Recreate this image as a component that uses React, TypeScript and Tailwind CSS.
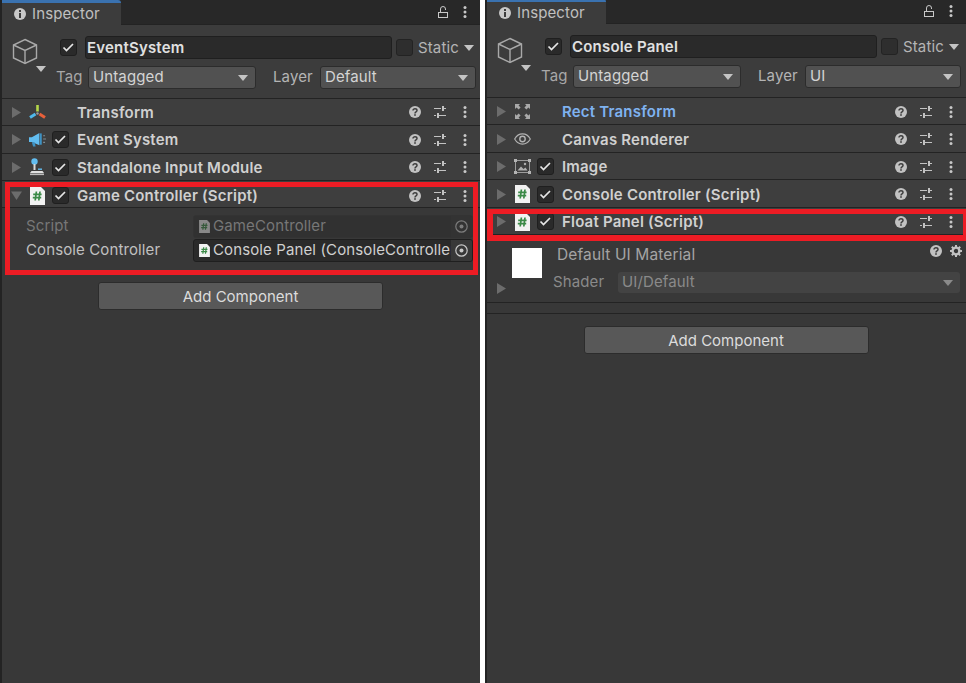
import React from 'react'

const Caret = ({ open = false }: { open?: boolean }) => (
  <svg width="11" height="11" viewBox="0 0 11 11" className="shrink-0">
    {open ? <path d="M0 1.5h11L5.5 10z" fill="#6c6c6c" /> : <path d="M1 0v11l9-5.5z" fill="#6c6c6c" />}
  </svg>
)

const SmallDown = ({ color = '#c4c4c4' }: { color?: string }) => (
  <svg width="10" height="6" viewBox="0 0 10 6" className="shrink-0">
    <path d="M0 0h10L5 6z" fill={color} />
  </svg>
)

const Check = () => (
  <div className="h-[17px] w-[17px] shrink-0 rounded-[3px] border border-[#1f1f1f] bg-[#2a2a2a]">
    <svg width="15" height="15" viewBox="0 0 15 15">
      <path d="M2.5 7.5l3 3 6.5-6.5" fill="none" stroke="#e6e6e6" strokeWidth="1.7" />
    </svg>
  </div>
)

const Help = () => (
  <svg width="12" height="12" viewBox="0 0 12 12">
    <circle cx="6" cy="6" r="6" fill="#c2c2c2" />
    <path d="M4 4.6C4 3.4 4.9 2.8 6 2.8s2 .6 2 1.7c0 1.5-2 1.4-2 2.9" fill="none" stroke="#3e3e3e" strokeWidth="1.5" />
    <rect x="5.2" y="8.2" width="1.6" height="1.6" fill="#3e3e3e" />
  </svg>
)

const Sliders = () => (
  <svg width="12" height="12" viewBox="0 0 12 12" fill="#c2c2c2">
    <rect x="0" y="2" width="7" height="1" />
    <rect x="8" y="0" width="2" height="5" />
    <rect x="10" y="2" width="2" height="1" />
    <rect x="0" y="9" width="2" height="1" />
    <rect x="3" y="7" width="2" height="5" />
    <rect x="5" y="9" width="7" height="1" />
  </svg>
)

const Dots = () => (
  <svg width="4" height="12" viewBox="0 0 4 12" fill="#c8c8c8">
    <circle cx="2" cy="1.5" r="1.5" />
    <circle cx="2" cy="6" r="1.5" />
    <circle cx="2" cy="10.5" r="1.5" />
  </svg>
)

const Target = ({ dim = false }: { dim?: boolean }) => (
  <svg width="13" height="13" viewBox="0 0 13 13">
    <circle cx="6.5" cy="6.5" r="5.7" fill="none" stroke={dim ? '#7c7c7c' : '#c8c8c8'} strokeWidth="1.2" />
    <circle cx="6.5" cy="6.5" r="2" fill={dim ? '#7c7c7c' : '#c8c8c8'} />
  </svg>
)

const Cube = () => (
  <svg width="26" height="27" viewBox="0 0 26 27" fill="none" stroke="#a9a9a9" strokeWidth="1.4">
    <path d="M13 1.5L24.5 7v13L13 25.5 1.5 20V7z" />
    <path d="M1.5 7L13 12.5 24.5 7M13 12.5v13" />
  </svg>
)

const ScriptIcon = ({ w = 15, h = 18, dim = false }: { w?: number; h?: number; dim?: boolean }) => (
  <svg width={w} height={h} viewBox="0 0 15 18" className="shrink-0" opacity={dim ? 0.45 : 1}>
    <path d="M0 0h11l4 4v14H0z" fill="#f2f2f2" />
    <path d="M6.4 4.5L5.2 13.5M10 4.5L8.8 13.5M3.2 7.4h8.4M2.8 10.6h8.4" stroke="#3b8a47" strokeWidth="1.7" fill="none" />
  </svg>
)

const TransformIcon = () => (
  <svg width="17" height="15" viewBox="0 0 17 15">
    <path d="M8.5 0v6.5" stroke="#b5d84a" strokeWidth="2.6" />
    <path d="M6.5 9L1 12.5" stroke="#4fb8ea" strokeWidth="3" />
    <path d="M10.5 9l5.5 3.5" stroke="#e8603a" strokeWidth="3" />
    <circle cx="8.5" cy="8.5" r="1.2" fill="#9a9a9a" />
  </svg>
)

const EventIcon = () => (
  <svg width="18" height="16" viewBox="0 0 18 16">
    <path d="M0 5h3l8-4.5v13L3 10H0z" fill="#62bdf0" />
    <path d="M3 10.5h3l1 4.5H4.3z" fill="#3f93c4" />
    <rect x="11.5" y="1" width="2" height="12" fill="#3f93c4" />
    <path d="M15 3.5h2M15 7h3M15 10.5h2" stroke="#7d8c96" strokeWidth="1.2" />
  </svg>
)

const InputIcon = () => (
  <svg width="15" height="18" viewBox="0 0 15 18">
    <circle cx="4.5" cy="3.5" r="3.2" fill="#62bdf0" />
    <rect x="3.5" y="6" width="2" height="6" fill="#d8d8d8" />
    <rect x="8" y="10.5" width="4" height="1.4" fill="#62bdf0" />
    <path d="M1.5 13h11l1.5 2H0z" fill="#e2e2e2" />
    <rect x="0" y="15.5" width="14" height="1.6" fill="#bdbdbd" />
  </svg>
)

const RectIcon = () => (
  <svg width="15" height="15" viewBox="0 0 15 15" fill="#a8a8a8">
    <path d="M0 0h5L3.6 1.6l2 2-2 2-2-2L0 5z" />
    <path d="M15 0v5l-1.6-1.4-2 2-2-2 2-2L10 0z" />
    <path d="M0 15v-5l1.6 1.4 2-2 2 2-2 2L5 15z" />
    <path d="M15 15h-5l1.4-1.6-2-2 2-2 2 2L15 10z" />
  </svg>
)

const EyeIcon = () => (
  <svg width="20" height="14" viewBox="0 0 20 14" fill="none" stroke="#b4b4b4">
    <path d="M.8 7C3 3 6 1 10 1s7 2 9.2 6C17 11 14 13 10 13S3 11 .8 7z" strokeWidth="1.3" />
    <circle cx="10" cy="7" r="3.2" strokeWidth="1.6" />
  </svg>
)

const ImageIcon = () => (
  <svg width="17" height="15" viewBox="0 0 17 15">
    <rect x="1.5" y="1.5" width="14" height="12" fill="none" stroke="#9c9c9c" />
    <path d="M3.5 11.5l3.5-4 2.5 2.5 2-1.5 2 3z" fill="#b0b0b0" />
    <circle cx="11" cy="5" r="1.2" fill="#b0b0b0" />
    <g fill="#b4b4b4">
      <rect x="0" y="0" width="3" height="3" />
      <rect x="14" y="0" width="3" height="3" />
      <rect x="0" y="12" width="3" height="3" />
      <rect x="14" y="12" width="3" height="3" />
    </g>
  </svg>
)

interface RowProps {
  name: string
  icon: React.ReactNode
  check?: boolean
  open?: boolean
  blue?: boolean
  className: string
}

const Row = ({ name, icon, check = true, open = false, blue = false, className }: RowProps) => (
  <div className={`flex items-center border-b border-[#232323] bg-[#3e3e3e] pl-[9px] ${className}`}>
    <Caret open={open} />
    <div className="ml-[7px] flex w-[17px] justify-center">{icon}</div>
    <div className="ml-[6px] w-[17px]">{check && <Check />}</div>
    <span className={`ml-[8px] flex-1 pt-[2px] text-[15px] font-semibold tracking-[0.2px] ${blue ? 'text-[#7fb2f0]' : 'text-[#d0d0d0]'}`}>{name}</span>
    <Help />
    <div className="ml-[13px]"><Sliders /></div>
    <div className="ml-[17px] mr-[13px]"><Dots /></div>
  </div>
)

const Select = ({ value, className }: { value: string; className: string }) => (
  <div className={`flex h-[23px] items-center justify-between rounded-[3px] border border-[#2c2c2c] bg-[#515151] pl-[4px] pr-[7px] text-[15px] text-[#d4d4d4] ${className}`}>
    <span>{value}</span>
    <SmallDown />
  </div>
)

const Header = ({ name, layer }: { name: string; layer: string }) => (
  <div className="flex h-[74px] border-b border-[#232323] bg-[#3c3c3c]">
    <div className="relative ml-[10px] mt-[13px] w-[26px]">
      <Cube />
      <div className="absolute left-[24px] top-[28px]"><SmallDown /></div>
    </div>
    <div className="ml-[8px] flex-1">
      <div className="mt-[11px] flex h-[23px] items-center pl-[14px]">
        <Check />
        <div className="ml-[8px] flex h-[23px] w-[307px] items-center rounded-[3px] border border-[#1f1f1f] bg-[#2a2a2a] pl-[1px] pt-[2px] text-[15px] font-semibold tracking-[0.2px] text-[#e0e0e0]">{name}</div>
        <div className="ml-[4px] h-[17px] w-[17px] rounded-[3px] border border-[#232323] bg-[#2e2e2e]" />
        <span className="ml-[5px] pt-[2px] text-[15px] text-[#b4b4b4]">Static</span>
        <div className="ml-[5px]"><SmallDown /></div>
      </div>
      <div className="mt-[7px] flex h-[23px] items-center">
        <span className="ml-[10px] w-[32px] text-[15px] text-[#a8a8a8]">Tag</span>
        <Select value="Untagged" className="w-[168px]" />
        <span className="ml-[17px] w-[47px] text-[15px] text-[#b4b4b4]">Layer</span>
        <Select value={layer} className="w-[156px]" />
      </div>
    </div>
  </div>
)

const TabBar = () => (
  <div className="flex h-[25px] border-b border-[#232323] bg-[#282828]">
    <div className="flex h-[25px] w-[119px] items-center gap-[6px] rounded-tr-[3px] border-t-[3px] border-[#3a72b0] bg-[#3c3c3c] pl-[12px] text-[15px] text-[#c0c0c0]">
      <svg width="12" height="12" viewBox="0 0 12 12">
        <circle cx="6" cy="6" r="6" fill="#c8c8c8" />
        <rect x="5" y="5" width="2" height="5" fill="#3c3c3c" />
        <rect x="5" y="2" width="2" height="2" fill="#3c3c3c" />
      </svg>
      Inspector
    </div>
    <div className="ml-auto mr-[13px] flex items-center gap-[15px]">
      <svg width="10" height="12" viewBox="0 0 10 12" fill="none" stroke="#c8c8c8" strokeWidth="1">
        <rect x=".5" y="6.5" width="9" height="5" />
        <path d="M2.5 6V3a2.5 2.5 0 0 1 5 0v1" />
      </svg>
      <Dots />
    </div>
  </div>
)

const AddComponent = () => (
  <div className="flex justify-center pr-[1px]">
    <div className="flex h-[28px] w-[285px] items-center justify-center rounded-[3px] border border-[#2c2c2c] bg-[#585858] pt-[2px] text-[15px] tracking-normal text-[#dcdcdc]">Add Component</div>
  </div>
)

const FieldRow = ({ label, value, dim = false }: { label: string; value: string; dim?: boolean }) => (
  <div className="flex h-[24px] items-center">
    <span className={`ml-[24px] w-[167px] text-[15px] ${dim ? 'text-[#777777]' : 'text-[#c0c0c0]'}`}>{label}</span>
    <div className={`flex h-[23px] w-[280px] items-center overflow-hidden rounded-[3px] border pl-[5px] text-[15px] ${dim ? 'border-[#333333] bg-[#313131] text-[#777777]' : 'border-[#1f1f1f] bg-[#2a2a2a] text-[#d0d0d0]'}`}>
      <ScriptIcon w={11} h={13} dim={dim} />
      <span className="ml-[3px] flex-1 overflow-hidden whitespace-nowrap">{value}</span>
      <div className={`flex h-full w-[21px] shrink-0 items-center justify-center ${dim ? 'bg-[#333333]' : 'bg-[#383838]'}`}>
        <Target dim={dim} />
      </div>
    </div>
  </div>
)

const RedBox = ({ className }: { className: string }) => (
  <div className={`pointer-events-none absolute border-[#ed1c24] ${className}`} />
)

const LeftPanel = () => (
  <div className="relative h-[683px] w-[480px] shrink-0 border-l-2 border-[#232323] bg-[#383838]">
    <TabBar />
    <Header name="EventSystem" layer="Default" />
    <Row name="Transform" icon={<TransformIcon />} check={false} className="h-[27px]" />
    <Row name="Event System" icon={<EventIcon />} className="h-[28px]" />
    <Row name="Standalone Input Module" icon={<InputIcon />} className="h-[27px]" />
    <Row name="Game Controller (Script)" icon={<ScriptIcon />} open className="h-[27px] pt-[3px]" />
    <div className="pt-[6px]">
      <FieldRow label="Script" value="GameController" dim />
      <FieldRow label="Console Controller" value="Console Panel (ConsoleController)" />
    </div>
    <div className="mt-[20px]"><AddComponent /></div>
    <RedBox className="left-[3px] top-[182px] h-[93px] w-[473px] border-[5px]" />
  </div>
)

const RightPanel = () => (
  <div className="relative h-[683px] flex-1 border-l-2 border-[#232323] bg-[#383838]">
    <div className="-mt-[1px]">
      <TabBar />
      <Header name="Console Panel" layer="UI" />
      <Row name="Rect Transform" icon={<RectIcon />} check={false} blue className="h-[27px] pt-[1px]" />
      <Row name="Canvas Renderer" icon={<EyeIcon />} check={false} className="h-[28px] pt-[1px]" />
      <Row name="Image" icon={<ImageIcon />} className="h-[27px] pt-[1px]" />
      <Row name="Console Controller (Script)" icon={<ScriptIcon />} className="h-[28px] pt-[1px]" />
      <Row name="Float Panel (Script)" icon={<ScriptIcon />} className="h-[27px] pt-[1px]" />
      <div className="relative flex h-[68px] border-b border-[#232323]">
        <div className="ml-[9px] flex flex-col justify-end pb-[8px]"><Caret /></div>
        <div className="ml-[5px] mt-[13px] h-[30px] w-[30px] bg-white" />
        <div className="ml-[15px] flex-1">
          <div className="mt-[8px] text-[15.5px] text-[#a4a4a4]">Default UI Material</div>
          <div className="mt-[5px] flex items-center">
            <span className="-ml-[4px] w-[65px] text-[15px] text-[#8a8a8a]">Shader</span>
            <div className="flex h-[21px] w-[342px] items-center justify-between rounded-[3px] bg-[#434343] pl-[4px] pr-[7px] text-[15px] text-[#8a8a8a]">
              <span>UI/Default</span>
              <SmallDown color="#8a8a8a" />
            </div>
          </div>
        </div>
        <div className="absolute right-[4px] top-[10px] flex items-center gap-[8px]">
          <Help />
          <svg width="12" height="12" viewBox="0 0 12 12">
            <circle cx="6" cy="6" r="3.4" fill="none" stroke="#c2c2c2" strokeWidth="2.4" />
            <path d="M6 0v2.5M6 9.5V12M0 6h2.5M9.5 6H12M1.8 1.8l1.7 1.7M8.5 8.5l1.7 1.7M10.2 1.8L8.5 3.5M3.5 8.5l-1.7 1.7" stroke="#c2c2c2" strokeWidth="2" />
          </svg>
        </div>
      </div>
      <div className="h-[11px] border-b border-[#232323]" />
      <div className="mt-[12px]"><AddComponent /></div>
    </div>
    <RedBox className="left-[0px] top-[209px] h-[32px] w-[479px] border-b-[6px] border-l-[6px] border-r-[3px] border-t-[5px]" />
  </div>
)

export default function App() {
  return (
    <div className="flex h-[683px] w-[966px] gap-[5px] overflow-hidden bg-white font-['Inter',sans-serif] tracking-[0.12px]">
      <LeftPanel />
      <RightPanel />
    </div>
  )
}
